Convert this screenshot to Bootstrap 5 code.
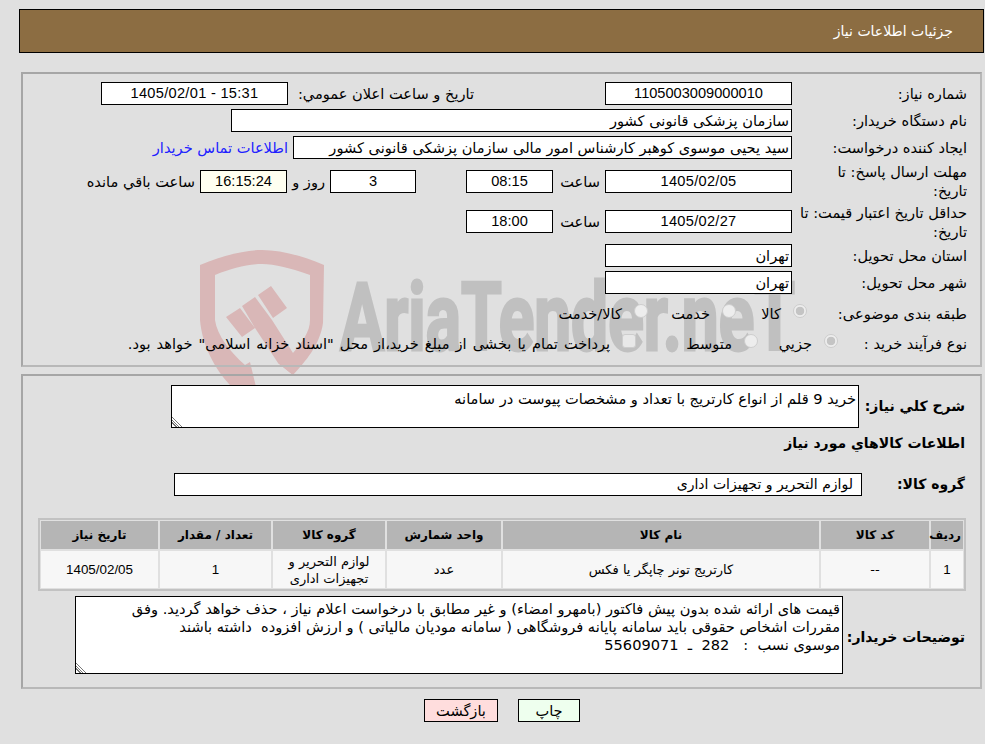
<!DOCTYPE html>
<html lang="fa" dir="rtl">
<head>
<meta charset="utf-8">
<title>جزئیات اطلاعات نیاز</title>
<link rel="stylesheet" href="https://cdn.jsdelivr.net/npm/bootstrap@5.3.0/dist/css/bootstrap.min.css">
<style>
html,body{height:744px;overflow:hidden}
body{background:#e0e0e0;color:#000;font:14.6px/19px "DejaVu Sans",sans-serif}
.stage{position:relative;height:744px;padding-top:9px}
.mark-layer{position:absolute;left:0;top:0;z-index:0}
.wm-word{font:700 94px "Roboto",sans-serif;fill:#c0c0c0;stroke:#c0c0c0;stroke-width:3;direction:ltr}
.head-bar,.panel-box,.btn-bar{position:relative;z-index:1}
.head-bar{height:44px;margin:0 1px 0 19px;padding:1px 30px 0 0;background:#8c6d42;border:1px solid #000;color:#fff;font-size:14px}
.panel-box{border:2px solid #a6a6a6;border-right-color:#b8b8b8;border-bottom-color:#b8b8b8;margin:0 3px 0 21px}
.p-one{margin-top:19px;height:295px;padding:6px 13px 0 0}
.p-two{margin-top:7px;height:315px;padding:9px 15px 0 0}
.line-r{height:27px}
.line-two{height:40px}
.line-five{height:41px}
.line-rad{height:34px}
.line-pay{height:26px}
.lab{width:175px;flex:none;padding-left:8px}
.fld{height:23px;line-height:21px;border:1px solid #000;background:#fff;flex:none;padding:0 2px;white-space:nowrap;overflow:hidden}
.num{font:14.6px/21px "Liberation Sans",sans-serif}
.date-s{letter-spacing:.3px}
.w187{width:187px}.w561{width:561px}.w499{width:499px}.w87{width:87px}.w86{width:86px}
.warm{background:#fffff0}
.gap131{width:131px;flex:none}
.gap50{width:50px;flex:none}
.cap186{width:186px;flex:none}
.cap51{width:52px;flex:none;padding-right:5px}
.cap43{width:43px;flex:none;padding-right:5px}
.cap5{padding-right:5px}
.buyer-link{color:#2020ff;text-decoration:none;padding-right:5px}
.lab160{width:160px;flex:none}
.lab129{width:129px;flex:none}
.c71{width:71px;flex:none}.c88{width:88px;flex:none}.c80{width:80px;flex:none}.c122{width:122px;flex:none}
.pick{appearance:none;-webkit-appearance:none;flex:none;width:14px;height:14px;margin:0 0 5px 12px;border:1px solid #cdcdcd;border-radius:50%;background:#ededed;opacity:1}
.pick-on{background:radial-gradient(circle,#c4c4c4 0 4px,#ededed 4.6px)}
.pick-box{border-radius:3px;background:#e8e8e8}
.wide-words{word-spacing:1.4px}
.bold-lab{font-weight:700;font-size:14px;flex:none}
.w106{width:106px}.w103{width:103px}.w122{width:122px;padding-top:4px}
.area{display:block;flex:none;border:1px solid #000;border-radius:0;background:#fff;padding:3px 2px 0;margin:0;font:inherit;overflow:hidden;color:#000;white-space:pre;outline:0;resize:both}
.area::-webkit-resizer{background:linear-gradient(45deg,transparent 0 2.8px,#777 2.8px 3.8px,transparent 3.8px 4.6px,#777 4.6px 5.6px,transparent 5.6px 6.4px,#777 6.4px 7.4px,transparent 7.4px)}
.a-top{width:688px;height:43px}
.a-note{width:768px;height:78px;line-height:18px;padding-top:3px;white-space:pre}
.sect{height:30px;line-height:30px;font-weight:700;font-size:14px}
.g-row{margin-top:15px}
.g-fld{width:688px;padding-right:8px;font-size:14px}
.tbl-wrap{margin:22px -1px 0 0;width:928px;border:2px solid #c2c2c2}
.goods{width:calc(100% + 2px);margin:-1px;border-collapse:separate;border-spacing:2px;table-layout:fixed;font-size:13px;background:transparent}
.goods>*>*>th,.goods>*>*>td{padding:0 2px;border:0;text-align:center;vertical-align:middle;box-shadow:none;color:#000}
.goods>*>*>th{height:28px;background:#b5b5b5;font-weight:700;font-size:12px}
.goods>*>*>td{height:37px;background:#f7f7f7;line-height:17px}
.goods>*>*>td.cell-num{font:13.4px/17px "Liberation Sans",sans-serif}
.n-row{margin-top:5px}
.btn-bar{margin:10px 0 0 19px;gap:20px}
.act{height:23px;line-height:21px;border:1px solid #000;border-radius:0;padding:0;color:#000;font:inherit;line-height:21px}
.act-print{width:62px;background:#eeffee}
.act-back{width:74px;background:#ffdddd}
</style>
</head>
<body>
<div class="stage">
<svg class="mark-layer" dir="ltr" width="985" height="400" viewBox="0 0 985 400" aria-hidden="true">
  <path fill="#d9b7b7" fill-rule="evenodd" d="M200 265 C225 255 245 250 262 250 C280 250 300 255 324 265 L323 323 C320 345 305 362 293 375 L278 363 L293 353 C302 342 310 332 310 320 L310 275 C290 268 275 264 262 264 C248 264 232 268 215 275 L215 320 C217 335 230 352 245 365 L250 362 L256 387 L232 387 C215 370 202 345 200 320 Z"/>
  <path fill="#d9b7b7" d="M226 317 L240 308 L255 328 L242 337 Z M242 306 L255 297 L272 320 L293 353 L293 375 L278 363 L255 328 Z M258 295 L271 286 L287 308 L273 318 Z"/>
  <text class="wm-word" x="340" y="350" textLength="455" lengthAdjust="spacingAndGlyphs">AriaTender.neT</text>
</svg>

<div class="head-bar d-flex align-items-center"><span>جزئیات اطلاعات نیاز</span></div>

<section class="panel-box p-one">
  <div class="d-flex align-items-center line-r">
    <div class="lab">شماره نیاز:</div>
    <div class="fld w187 num text-center">1105003009000010</div>
    <div class="gap131"></div>
    <div class="cap186">تاریخ و ساعت اعلان عمومي:</div>
    <div class="fld w187 num date-s text-center">15:31 - 1405/02/01</div>
  </div>
  <div class="d-flex align-items-center line-r">
    <div class="lab">نام دستگاه خریدار:</div>
    <div class="fld w561">سازمان پزشکی قانونی کشور</div>
  </div>
  <div class="d-flex align-items-center line-r">
    <div class="lab">ایجاد کننده درخواست:</div>
    <div class="fld w499">سید یحیی موسوی کوهبر کارشناس امور مالی سازمان پزشکی قانونی کشور</div>
    <a class="buyer-link" href="#">اطلاعات تماس خریدار</a>
  </div>
  <div class="d-flex align-items-center line-two">
    <div class="lab">مهلت ارسال پاسخ: تا تاریخ:</div>
    <div class="fld w187 num date-s text-center">1405/02/05</div>
    <div class="cap51">ساعت</div>
    <div class="fld w87 num text-center">08:15</div>
    <div class="gap50"></div>
    <div class="fld w86 num text-center">3</div>
    <div class="cap43">روز و</div>
    <div class="fld w87 num text-center warm">16:15:24</div>
    <div class="cap5">ساعت باقي مانده</div>
  </div>
  <div class="d-flex align-items-center line-five">
    <div class="lab">حداقل تاریخ اعتبار قیمت: تا تاریخ:</div>
    <div class="fld w187 num date-s text-center">1405/02/27</div>
    <div class="cap51">ساعت</div>
    <div class="fld w87 num text-center">18:00</div>
  </div>
  <div class="d-flex align-items-center line-r">
    <div class="lab">استان محل تحویل:</div>
    <div class="fld w187">تهران</div>
  </div>
  <div class="d-flex align-items-center line-r">
    <div class="lab">شهر محل تحویل:</div>
    <div class="fld w187">تهران</div>
  </div>
  <div class="d-flex align-items-center line-rad">
    <div class="lab160">طبقه بندی موضوعی:</div>
    <div class="c71 d-flex align-items-center"><input class="pick pick-on" type="radio" name="kind" checked disabled><span>کالا</span></div>
    <div class="c88 d-flex align-items-center"><input class="pick" type="radio" name="kind" disabled><span>خدمت</span></div>
    <div class="d-flex align-items-center"><input class="pick" type="radio" name="kind" disabled><span>کالا/خدمت</span></div>
  </div>
  <div class="d-flex align-items-center line-pay">
    <div class="lab129">نوع فرآیند خرید :</div>
    <div class="c80 d-flex align-items-center"><input class="pick pick-on" type="radio" name="proc" checked disabled><span>جزيي</span></div>
    <div class="c122 d-flex align-items-center"><input class="pick" type="radio" name="proc" disabled><span>متوسط</span></div>
    <div class="d-flex align-items-center"><input class="pick pick-box" type="checkbox" disabled><span class="wide-words">پرداخت تمام یا بخشی از مبلغ خرید،از محل "اسناد خزانه اسلامی" خواهد بود.</span></div>
  </div>
</section>

<section class="panel-box p-two">
  <div class="d-flex align-items-center">
    <div class="bold-lab w106">شرح كلي نياز:</div>
    <textarea class="area a-top" readonly>خرید 9 قلم از انواع کارتریج با تعداد و مشخصات پیوست در سامانه</textarea>
  </div>
  <div class="sect">اطلاعات كالاهاي مورد نياز</div>
  <div class="d-flex align-items-center g-row">
    <div class="bold-lab w103">گروه کالا:</div>
    <div class="fld g-fld">لوازم التحریر و تجهیزات اداری</div>
  </div>
  <div class="tbl-wrap">
    <table class="table goods">
      <colgroup><col style="width:32px"><col style="width:108px"><col style="width:316px"><col style="width:114px"><col style="width:112px"><col style="width:111px"><col></colgroup>
      <thead><tr><th>ردیف</th><th>کد کالا</th><th>نام کالا</th><th>واحد شمارش</th><th>گروه کالا</th><th>تعداد / مقدار</th><th>تاریخ نیاز</th></tr></thead>
      <tbody><tr><td class="cell-num">1</td><td>--</td><td>کارتریج تونر چاپگر یا فکس</td><td>عدد</td><td>لوازم التحریر و تجهیزات اداری</td><td class="cell-num">1</td><td class="cell-num">1405/02/05</td></tr></tbody>
    </table>
  </div>
  <div class="d-flex align-items-center n-row">
    <div class="bold-lab w122">توضیحات خریدار:</div>
    <textarea class="area a-note" readonly>قیمت های ارائه شده بدون پیش فاکتور (بامهرو امضاء) و غیر مطابق با درخواست اعلام نیاز ، حذف خواهد گردید. وفق
مقررات اشخاص حقوقی باید سامانه پایانه فروشگاهی ( سامانه مودیان مالیاتی ) و ارزش افزوده  داشته باشند
موسوی نسب  :   282  ـ  55609071</textarea>
  </div>
</section>

<div class="btn-bar d-flex justify-content-center">
  <button type="button" class="btn act act-print">چاپ</button>
  <button type="button" class="btn act act-back">بازگشت</button>
</div>
</div>
<script src="https://cdn.jsdelivr.net/npm/bootstrap@5.3.0/dist/js/bootstrap.bundle.min.js"></script>
</body>
</html>
